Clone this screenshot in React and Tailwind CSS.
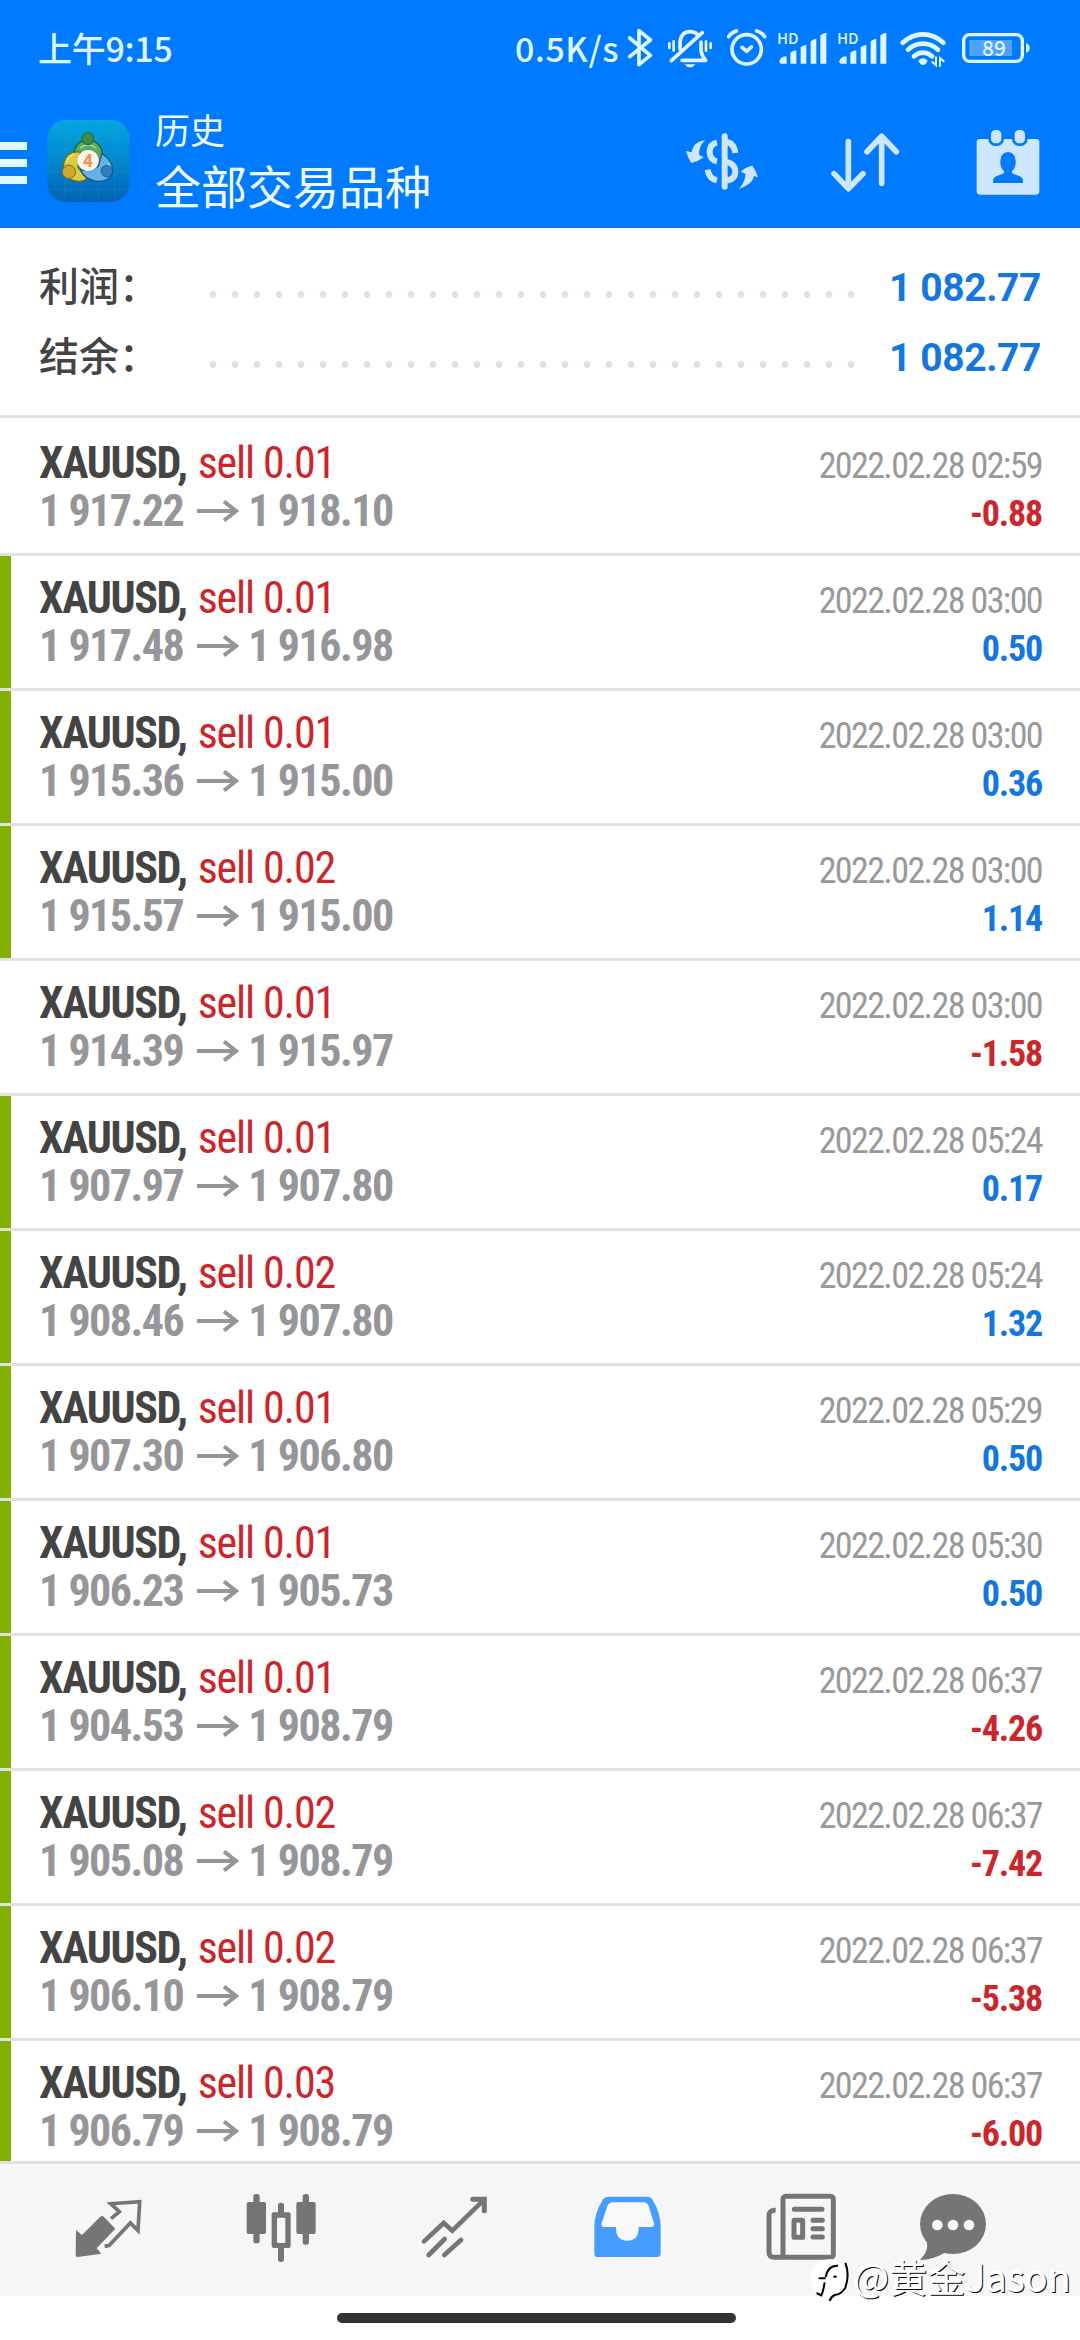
const deals = [
  { volume: '0.01', open: '1 917.22', close: '1 918.10', time: '2022.02.28 02:59', profit: '-0.88', marked: false },
  { volume: '0.01', open: '1 917.48', close: '1 916.98', time: '2022.02.28 03:00', profit: '0.50', marked: true },
  { volume: '0.01', open: '1 915.36', close: '1 915.00', time: '2022.02.28 03:00', profit: '0.36', marked: true },
  { volume: '0.02', open: '1 915.57', close: '1 915.00', time: '2022.02.28 03:00', profit: '1.14', marked: true },
  { volume: '0.01', open: '1 914.39', close: '1 915.97', time: '2022.02.28 03:00', profit: '-1.58', marked: false },
  { volume: '0.01', open: '1 907.97', close: '1 907.80', time: '2022.02.28 05:24', profit: '0.17', marked: true },
  { volume: '0.02', open: '1 908.46', close: '1 907.80', time: '2022.02.28 05:24', profit: '1.32', marked: true },
  { volume: '0.01', open: '1 907.30', close: '1 906.80', time: '2022.02.28 05:29', profit: '0.50', marked: true },
  { volume: '0.01', open: '1 906.23', close: '1 905.73', time: '2022.02.28 05:30', profit: '0.50', marked: true },
  { volume: '0.01', open: '1 904.53', close: '1 908.79', time: '2022.02.28 06:37', profit: '-4.26', marked: true },
  { volume: '0.02', open: '1 905.08', close: '1 908.79', time: '2022.02.28 06:37', profit: '-7.42', marked: true },
  { volume: '0.02', open: '1 906.10', close: '1 908.79', time: '2022.02.28 06:37', profit: '-5.38', marked: true },
  { volume: '0.03', open: '1 906.79', close: '1 908.79', time: '2022.02.28 06:37', profit: '-6.00', marked: true },
];

const summary = [
  { label: '利润：', value: '1 082.77' },
  { label: '结余：', value: '1 082.77' },
];

/* Status bar icons */

function BluetoothIcon() {
  return (
    <svg className="h-10 w-[26px]" viewBox="351 24 78 120" fill="none" stroke="currentColor" strokeWidth="11" strokeLinecap="round" strokeLinejoin="round">
      <path d="M359 54 L421 106 L387 134 V32 L421 60 L359 110" />
    </svg>
  );
}

function MutedBellIcon() {
  return (
    <svg className="ml-3.5 h-10 w-[46px]" viewBox="471 24 138 120" fill="none" stroke="currentColor" strokeWidth="11" strokeLinecap="round" strokeLinejoin="round">
      <path d="M510 88 V68 Q513 35 540 35 Q555 35 563 44" />
      <path d="M577 38 L484 122" />
      <path d="M573 66 V90 Q575 108 587 121 H516" />
      <path d="M524 133 H556 Q550 142 540 142 Q530 142 524 133Z" fill="currentColor" stroke="none" />
      <path d="M478 70 V84 M491 64 V92 M588 64 V92 M602 70 V84" strokeWidth="8" />
    </svg>
  );
}

function AlarmIcon() {
  return (
    <svg className="ml-3.5 h-10 w-10" viewBox="651 24 120 120" fill="none" stroke="currentColor" strokeWidth="11" strokeLinecap="round" strokeLinejoin="round">
      <circle cx="710" cy="88" r="44" />
      <path d="M656 50 Q663 38 679 33 M740 33 Q757 38 764 50 M696 82 L710 94 L724 81" />
    </svg>
  );
}

function SignalIcon() {
  return (
    <svg className="ml-2.5 h-10 w-[50px]" viewBox="801 24 150 120" fill="currentColor">
      <text x="801" y="71" fontSize="45" fontWeight="500" fontFamily="Noto Sans CJK SC, sans-serif">HD</text>
      <path d="M808 124 Q812 110 826 109 Q830 109 830 113 V131 H813 Q808 131 808 124Z" />
      <path d="M841 98 Q848 92 859 91 V131 H841Z" />
      <path d="M872 82 Q878 76 889 74 V131 H872Z" />
      <path d="M902 64 Q908 58 919 56 V131 H902Z" />
      <path d="M931 46 Q938 40 949 38 V131 H931Z" />
    </svg>
  );
}

function WifiIcon() {
  return (
    <svg className="ml-[13px] h-10 w-[46px]" viewBox="1170 24 138 120" fill="none" stroke="currentColor" strokeWidth="14" strokeLinecap="round">
      <path d="M1178 68 Q1205 43 1239 43 Q1273 43 1300 68" />
      <path d="M1194 89 Q1214 71 1239 71 Q1264 71 1284 89" />
      <path d="M1212 109 Q1224 98 1239 98 Q1254 98 1266 109" />
      <path d="M1225 122 Q1239 108 1253 122 Q1248 134 1239 135 Q1230 134 1225 122Z" fill="currentColor" stroke="none" />
      <path d="M1278 112 V136 L1267 126 M1290 138 V114 L1301 124" strokeWidth="6" />
    </svg>
  );
}

function BatteryIcon() {
  return (
    <svg className="ml-[15px] h-10 w-[70px]" viewBox="1350 24 210 120" fill="currentColor">
      <rect x="1358" y="44" width="176" height="80" rx="18" fill="none" stroke="currentColor" strokeWidth="10" />
      <rect x="1375" y="60" width="128" height="48" fill="#4fa3ff" />
      <path d="M1545 70 Q1556 72 1556 84 Q1556 96 1545 98Z" />
      <text x="1449" y="107" fontSize="63" fontWeight="500" textAnchor="middle" fontFamily="Noto Sans CJK SC, sans-serif">89</text>
    </svg>
  );
}

/* App bar icons */

function AppLogo() {
  return (
    <svg className="ml-5 h-[82px] w-[83px]" viewBox="52 33 248 247">
      <defs>
        <linearGradient id="tile" x1="0" y1="0" x2="0" y2="1">
          <stop offset="0" stopColor="#05a5e2" />
          <stop offset="0.5" stopColor="#0288cc" />
          <stop offset="1" stopColor="#0361b4" />
        </linearGradient>
      </defs>
      <rect x="52" y="33" width="248" height="247" rx="56" fill="url(#tile)" />
      <path d="M105 34 V279 M155 34 V279 M205 34 V279 M255 34 V279 M53 85 H299 M53 130 H299 M53 190 H299 M53 243 H299" stroke="#3bb4e6" strokeOpacity="0.25" strokeWidth="2" />
      <g strokeWidth="4" strokeLinejoin="round">
        <path d="M134 152 Q126 98 174 92 Q224 98 219 160 Q210 178 198 168 L174 126 L148 142Z" fill="#58ad58" stroke="#1f5f3c" />
        <path d="M152 130 Q112 124 102 160 Q92 212 146 218 Q166 218 174 206 L144 176Z" fill="#dccb3c" stroke="#6b6a26" />
        <path d="M216 134 Q248 154 250 188 Q242 220 200 218 Q164 212 152 184 L182 186 L206 172Z" fill="#62b3e6" stroke="#17578f" />
      </g>
      <path d="M150 118 Q174 98 200 118 M112 160 Q112 142 130 138 M236 164 Q244 184 232 204" fill="none" stroke="#fff" strokeOpacity="0.5" strokeWidth="4" />
      <circle cx="174" cy="89" r="18" fill="#3c8c46" stroke="#226036" strokeWidth="3" />
      <circle cx="117" cy="189" r="20" fill="#cfa92b" stroke="#80691f" strokeWidth="3" />
      <circle cx="231" cy="187" r="17" fill="#2f7fc0" stroke="#175a96" strokeWidth="3" />
      <circle cx="175" cy="155" r="32" fill="#fbf6ef" />
      <text x="174" y="175" fontSize="54" fontWeight="700" textAnchor="middle" fill="#f0934a" fontFamily="Roboto, sans-serif">4</text>
    </svg>
  );
}

function CurrencyIcon() {
  return (
    <svg className="h-[70px] w-[74px]" viewBox="75 45 222 210" fill="none" stroke="currentColor" strokeWidth="18">
      <path d="M194 76 V227" strokeLinecap="round" />
      <path d="M171 95 Q149 99 149 122 Q149 146 171 151" />
      <path d="M143 176 Q146 203 171 208" />
      <path d="M196 92 Q222 94 226 126" />
      <path d="M196 152 Q226 158 226 182 Q226 206 196 209" />
      <path d="M136 88 Q102 90 94 124 L78 120 Q84 142 94 156 Q114 152 131 139 L117 131 Q116 104 136 88Z" fill="currentColor" stroke="none" />
      <path d="M237 234 Q278 220 282 195 L294 199 Q288 178 277 164 Q258 167 242 182 L256 188 Q258 208 237 234Z" fill="currentColor" stroke="none" />
    </svg>
  );
}

function SortIcon() {
  return (
    <svg className="ml-[71px] h-[70px] w-[70px]" viewBox="510 45 210 210" fill="none" stroke="currentColor" strokeWidth="17" strokeLinecap="round" strokeLinejoin="round">
      <path d="M565 92 V232 M522 188 L565 233 L609 188" />
      <path d="M665 217 V77 M621 122 L665 76 L709 122" />
    </svg>
  );
}

function CalendarIcon() {
  return (
    <svg className="ml-[76px] h-[70px] w-16" viewBox="948 45 192 210" fill="currentColor">
      <rect x="950" y="84" width="188" height="167" rx="10" />
      <rect x="989" y="53" width="39" height="48" rx="17" stroke="#007aff" strokeWidth="8" />
      <rect x="1060" y="53" width="39" height="48" rx="17" stroke="#007aff" strokeWidth="8" />
      <path fill="#007aff" d="M1044 123 Q1066 124 1067 150 Q1068 172 1056 180 V187 L1080 196 Q1089 200 1089 208 V216 H999 V208 Q1000 200 1008 196 L1032 187 V180 Q1020 172 1021 150 Q1022 124 1044 123Z" />
    </svg>
  );
}

/* Bottom tab icons */

function QuotesIcon() {
  return (
    <svg className="ml-[74px] h-[75px] w-[69px]" viewBox="42 30 207 225" fill="none" stroke="currentColor" strokeWidth="11">
      <path d="M48 150 L66 165 L120 111 Q126 105 132 111 L166 146 L110 205 L124 221 L53 231 Q47 231 47 226Z" fill="currentColor" stroke="none" />
      <path d="M153 116 L178 95 L152 71 L239 65 L234 152 L211 129 L148 196 L134 199" />
    </svg>
  );
}

function ChartIcon() {
  return (
    <svg className="ml-[102px] h-[75px] w-[72px]" viewBox="555 30 216 225" fill="currentColor">
      <rect x="580" y="42" width="19" height="148" rx="8" />
      <rect x="560" y="66" width="58" height="96" rx="6" />
      <rect x="728" y="42" width="19" height="152" rx="8" />
      <rect x="709" y="66" width="58" height="96" rx="6" />
      <rect x="654" y="68" width="18" height="178" rx="8" />
      <rect x="635" y="97" width="57" height="107" rx="6" />
      <rect x="651" y="113" width="25" height="76" rx="4" fill="#f6f6f6" />
    </svg>
  );
}

function TradeIcon() {
  return (
    <svg className="ml-[103px] h-[75px] w-[68px]" viewBox="1080 30 204 225" fill="none" stroke="currentColor" strokeWidth="14" strokeLinecap="round">
      <path d="M1092 184 L1151 129 L1177 152 L1270 61" />
      <path d="M1238 58 H1273 V92" strokeWidth="15" />
      <path d="M1106 225 L1154 177 M1153 225 L1203 180" />
    </svg>
  );
}

function HistoryIcon() {
  return (
    <svg className="ml-[105px] h-[75px] w-[69px]" viewBox="69 30 207 225">
      <path fill="#449dff" d="M115 50 H232 Q242 50 248 60 Q272 100 272 140 V220 Q272 231 262 231 H84 Q73 231 73 221 V140 Q73 100 99 58 Q105 50 115 50Z" />
      <path fill="#f9f9f9" d="M127 67 H222 Q231 67 235 76 L252 130 Q254 141 245 141 H206 Q207 182 172 182 Q137 182 138 141 H102 Q92 141 95 130 L113 76 Q118 67 127 67Z" />
    </svg>
  );
}

function NewsIcon() {
  return (
    <svg className="ml-[103px] h-[75px] w-[72px]" viewBox="585 30 216 225" fill="none" stroke="currentColor" strokeWidth="15" strokeLinecap="round">
      <path d="M617 91 Q597 90 597 106 V216 Q597 232 613 232 H642" strokeLinecap="butt" />
      <rect x="639" y="49" width="151" height="183" rx="8" />
      <path d="M673 88 H756 M729 121 H757 M729 146 H757 M729 171 H757" />
      <rect x="672" y="121" width="26" height="51" rx="2" />
    </svg>
  );
}

function ChatIcon() {
  return (
    <svg className="ml-[81px] h-[75px] w-[69px]" viewBox="1044 30 207 225" fill="currentColor">
      <ellipse cx="1149" cy="132" rx="99" ry="90" />
      <path d="M1070 184 Q1078 212 1050 240 Q1092 238 1124 218Z" />
      <g fill="#f9f9f9">
        <circle cx="1102" cy="135" r="16" />
        <circle cx="1149" cy="135" r="16" />
        <circle cx="1197" cy="135" r="16" />
      </g>
    </svg>
  );
}

function StatusBar() {
  return (
    <div className="flex h-[69px] items-center pt-[27px] pr-[49px] pl-[38px] font-['Noto_Sans_CJK_SC',sans-serif] text-[34px] leading-10 font-medium text-[#dff5ff]">
      <span className="tracking-[-0.3px]">上午9:15</span>
      <span className="mr-2 ml-auto tracking-[0.5px]">0.5K/s</span>
      <BluetoothIcon />
      <MutedBellIcon />
      <AlarmIcon />
      <SignalIcon />
      <SignalIcon />
      <WifiIcon />
      <BatteryIcon />
    </div>
  );
}

function AppBar() {
  return (
    <div className="flex flex-1 items-center pt-[27px] pr-10 text-[#cfe6ff]">
      <div className="mt-1 flex w-[27px] flex-col gap-[9px]">
        <div className="h-2 bg-[#e2f8ff]" />
        <div className="h-2 bg-[#e2f8ff]" />
        <div className="h-2 bg-[#e2f8ff]" />
      </div>
      <AppLogo />
      <div className="-mt-1 ml-[25px] flex-1 font-['Noto_Sans_CJK_SC',sans-serif] text-[#f0fbff]">
        <p className="text-[35px] leading-[50px]">历史</p>
        <p className="text-[46px] leading-[60px]">全部交易品种</p>
      </div>
      <CurrencyIcon />
      <SortIcon />
      <CalendarIcon />
    </div>
  );
}

function SummaryRow({ label, value }) {
  return (
    <div className="flex h-[70px] items-center pr-[39px] pl-[39px]">
      <span className="w-[164px] font-['Noto_Sans_CJK_SC',sans-serif] text-[40px] font-medium whitespace-nowrap text-[#444]">{label}</span>
      <div className="mt-5 h-[7px] w-[660px] bg-[radial-gradient(circle_at_10px_3.5px,#e0e0e0_3px,transparent_3.8px)] bg-[size:22px_7px]" />
      <span className="mt-2 flex-1 text-right font-['Roboto'] text-[39px] font-bold tracking-[-0.4px] whitespace-nowrap text-[#1477e0]">{value}</span>
    </div>
  );
}

function DealRow({ deal }) {
  const loss = deal.profit.startsWith('-');
  return (
    <div className="flex h-[135px] shrink-0 border-b-[3px] border-[#e0e0e0]">
      <div className={deal.marked ? 'w-[11px] bg-[#80b000]' : 'w-[11px]'} />
      <div className="flex-1 pt-[18px] pr-[38px] pl-7 text-[44px] leading-[48px]">
        <div className="flex h-12 items-baseline justify-between">
          <p className="tracking-[-1.15px] text-[#cb262b]">
            <span className="mr-[2px] font-bold tracking-[-1.4px] text-[#444]">XAUUSD,</span> sell {deal.volume}
          </p>
          <p className="text-[36px] tracking-[-1.6px] text-[#999]">{deal.time}</p>
        </div>
        <div className="flex h-12 items-baseline justify-between font-bold">
          <p className="flex items-center tracking-[-1.5px] text-[#96969a]">
            {deal.open}
            <svg className="mr-[9px] ml-[14px] h-[22px] w-[42px]" viewBox="0 0 42 22" fill="none" stroke="#959595" strokeWidth="4">
              <path d="M0 11 H39 M27 1.5 L39 11 L27 20.5" />
            </svg>
            {deal.close}
          </p>
          <p className={loss ? 'text-[36px] tracking-[-1.2px] text-[#cb262b]' : 'text-[36px] tracking-[-1.2px] text-[#1477e0]'}>{deal.profit}</p>
        </div>
      </div>
    </div>
  );
}

function TabBar() {
  return (
    <nav className="flex h-[135px] shrink-0 border-t-[3px] border-[#e0e0e0] bg-[#f6f6f6] pt-[26px] text-[#757575]">
      <QuotesIcon />
      <ChartIcon />
      <TradeIcon />
      <HistoryIcon />
      <NewsIcon />
      <ChatIcon />
    </nav>
  );
}

function Watermark() {
  return (
    <div className="absolute right-[9px] bottom-[33px] flex items-center text-white">
      <svg className="h-[46px] w-[42px]" viewBox="715 238 126 138" fill="none" stroke="#000" strokeWidth="6">
        <circle cx="777" cy="302" r="57" fill="#fff" stroke="none" />
        <path d="M802 264 Q772 262 765 298 M744 302 H765 M762 314 Q758 340 752 353 L738 346 M824 256 Q838 290 824 330 Q812 350 792 352 Q780 358 777 370" />
        <path d="M788 297 H798" />
      </svg>
      <span className="mb-2 ml-[2px] font-['Noto_Sans_CJK_SC',sans-serif] text-[38px] leading-[46px] [text-shadow:1px_1px_0_#000,-1px_-1px_0_#fff]">@黄金Jason</span>
    </div>
  );
}

export default function App() {
  return (
    <div className="relative flex h-[2340px] w-[1080px] flex-col overflow-hidden bg-white font-['Roboto_Condensed',Roboto,sans-serif]">
      <header className="flex h-[228px] shrink-0 flex-col border-b-2 border-[#0f70de] bg-[#007aff]">
        <StatusBar />
        <AppBar />
      </header>

      <section className="h-[190px] shrink-0 border-b-[3px] border-[#e0e0e0] pt-[21px]">
        {summary.map((row) => (
          <SummaryRow key={row.label} {...row} />
        ))}
      </section>

      <main className="flex min-h-0 flex-1 flex-col overflow-hidden pt-[3px]">
        {deals.map((deal, i) => (
          <DealRow key={i} deal={deal} />
        ))}
      </main>

      <TabBar />

      {/* gesture pill */}
      <div className="h-11 shrink-0 pt-[17px] pl-[337px]">
        <div className="h-2.5 w-[399px] rounded-full bg-[#333]" />
      </div>

      <Watermark />
    </div>
  );
}
